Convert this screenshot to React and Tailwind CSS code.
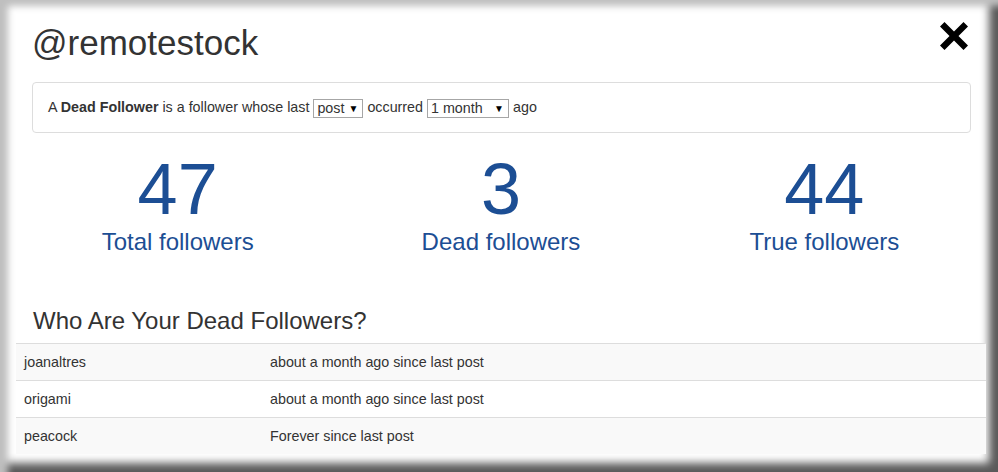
import React from "react";

const stats = [
  { value: 47, label: "Total followers" },
  { value: 3, label: "Dead followers" },
  { value: 44, label: "True followers" },
];

const deadFollowers = [
  { name: "joanaltres", since: "about a month ago since last post" },
  { name: "origami", since: "about a month ago since last post" },
  { name: "peacock", since: "Forever since last post" },
];

const FakeSelect = ({ value, width }) => (
  <span
    className={`relative inline-flex items-center h-[19px] border border-[#a6a6a6] bg-white pl-[3px] align-middle ${width}`}
  >
    <span className="leading-[17px]">{value}</span>
    <span className="absolute right-[4px] top-[3px] text-[10px] leading-[11px] text-black">▼</span>
  </span>
);

const CloseIcon = () => (
  <svg viewBox="0 0 28 28" className="w-[28px] h-[28px]" fill="#000">
    <path d="M4.5 0 14 9.5 23.5 0 28 4.5 18.5 14 28 23.5 23.5 28 14 18.5 4.5 28 0 23.5 9.5 14 0 4.5Z" />
  </svg>
);

export default function App() {
  return (
    <div
      className="w-[998px] h-[472px] overflow-hidden bg-white text-[#333] pl-4 pr-[12px] shadow-[inset_11px_9px_7px_-3px_#bfbfbf,inset_-13px_-13px_9px_-4px_#5a5a5a]"
      style={{ fontFamily: '"Liberation Sans", Arial, sans-serif' }}
    >
      <div className="relative pt-[23px]">
        <h1 className="text-[35px] leading-[40px] pl-[16px]">@remotestock</h1>
        <button className="absolute right-[18px] top-[22px]">
          <CloseIcon />
        </button>
      </div>

      <div className="mt-[19px] ml-4 mr-[15px] h-[51px] border border-[#dddddd] rounded-[4px] px-[15px] flex items-center text-[14.3px]">
        <p className="leading-[20px]">
          A <b>Dead Follower</b> is a follower whose last{" "}
          <FakeSelect value="post" width="w-[50px]" /> occurred{" "}
          <FakeSelect value="1 month" width="w-[82px]" /> ago
        </p>
      </div>

      <div className="grid grid-cols-3 mt-[17px] text-center text-[#1c4e94]">
        {stats.map((s) => (
          <div key={s.label}>
            <div className="text-[72px] leading-[79px]">{s.value}</div>
            <div className="text-[24px] leading-[26px]">{s.label}</div>
          </div>
        ))}
      </div>

      <h3 className="mt-[53px] pl-[17px] text-[24px] leading-[26px]">Who Are Your Dead Followers?</h3>

      <table className="mt-[9px] w-full text-[14.3px] border-collapse">
        <tbody>
          {deadFollowers.map((f, i) => (
            <tr key={f.name} className={i % 2 === 0 ? "bg-[#f9f9f9]" : "bg-white"}>
              <td className="w-[246px] border-t border-[#dddddd] px-2 py-2 leading-[20px]">{f.name}</td>
              <td className="border-t border-[#dddddd] px-2 py-2 leading-[20px]">{f.since}</td>
            </tr>
          ))}
        </tbody>
      </table>
    </div>
  );
}
